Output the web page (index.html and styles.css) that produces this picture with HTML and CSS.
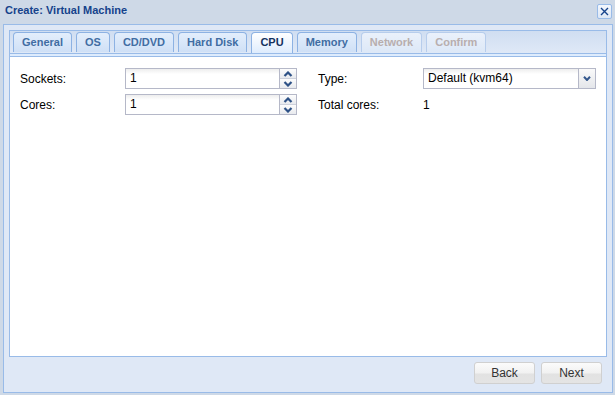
FILE: index.html
```html
<!DOCTYPE html>
<html>
<head>
  <title>Create: Virtual Machine</title>
  <link rel="stylesheet" href="styles.css">
</head>
<body>
  <div class="window">
    <div class="win-header">
      <span class="win-title">Create: Virtual Machine</span>
      <span class="win-close">
        <svg width="9" height="9" viewBox="0 0 9 9"><path d="M1 1 L8 8 M8 1 L1 8" stroke="#15428b" stroke-width="1.4" fill="none"/></svg>
      </span>
    </div>

    <div class="win-body">
      <div class="tabpanel">
        <div class="tab-bar">
          <div class="tab">General</div>
          <div class="tab">OS</div>
          <div class="tab">CD/DVD</div>
          <div class="tab">Hard Disk</div>
          <div class="tab active">CPU</div>
          <div class="tab">Memory</div>
          <div class="tab disabled">Network</div>
          <div class="tab disabled">Confirm</div>
        </div>
        <div class="tab-strip"></div>

        <div class="tab-content">
          <div class="form">
            <!-- left column -->
            <div class="field">
              <label class="field-label">Sockets:</label>
              <div class="control">
                <div class="text-box">1</div>
                <div class="spinner">
                  <span class="spin-half">
                    <svg width="10" height="6" viewBox="0 0 10 6"><path d="M1.5 5 L5 1.5 L8.5 5" stroke="#2d5186" stroke-width="2.2" fill="none"/></svg>
                  </span>
                  <span class="spin-half">
                    <svg width="10" height="6" viewBox="0 0 10 6"><path d="M1.5 1 L5 4.5 L8.5 1" stroke="#2d5186" stroke-width="2.2" fill="none"/></svg>
                  </span>
                </div>
              </div>
            </div>
            <!-- right column -->
            <div class="field">
              <label class="field-label">Type:</label>
              <div class="control">
                <div class="text-box">Default (kvm64)</div>
                <div class="combo-trigger">
                  <svg width="8" height="5" viewBox="0 0 8 5"><path d="M1 0.8 L4 4 L7 0.8" stroke="#34578c" stroke-width="2" fill="none"/></svg>
                </div>
              </div>
            </div>

            <div class="field">
              <label class="field-label">Cores:</label>
              <div class="control">
                <div class="text-box">1</div>
                <div class="spinner">
                  <span class="spin-half">
                    <svg width="10" height="6" viewBox="0 0 10 6"><path d="M1.5 5 L5 1.5 L8.5 5" stroke="#2d5186" stroke-width="2.2" fill="none"/></svg>
                  </span>
                  <span class="spin-half">
                    <svg width="10" height="6" viewBox="0 0 10 6"><path d="M1.5 1 L5 4.5 L8.5 1" stroke="#2d5186" stroke-width="2.2" fill="none"/></svg>
                  </span>
                </div>
              </div>
            </div>
            <div class="field">
              <label class="field-label">Total cores:</label>
              <div class="display-value">1</div>
            </div>
          </div>
        </div>
      </div>

      <div class="button-bar">
        <button class="btn">Back</button>
        <button class="btn">Next</button>
      </div>
    </div>
  </div>
</body>
</html>
```

FILE: styles.css
```css
body {
  margin: 0;
  font-family: "Liberation Sans", Arial, sans-serif;
  font-size: 12px;
  color: #000;
}

.window {
  width: 615px;
  height: 395px;
  background-color: #ced9e7;
  display: flex;
  flex-direction: column;
  box-sizing: border-box;
}

/* header */
.win-header {
  height: 24px;
  flex: none;
  display: flex;
  justify-content: space-between;
  align-items: flex-start;
  padding: 0 3px 0 5px;
}

.win-title {
  font-size: 11px;
  font-weight: bold;
  color: #15428b;
  line-height: 20px;
}

.win-close {
  margin-top: 4px;
  width: 15px;
  height: 15px;
  box-sizing: border-box;
  border: 1px solid #99bbe8;
  border-radius: 2px;
  background: linear-gradient(#f3f7fd, #dde7f5);
  display: flex;
  align-items: center;
  justify-content: center;
}

/* body */
.win-body {
  flex: 1;
  margin: 0 2px 2px 3px;
  border: 1px solid #99bbe8;
  background-color: #dfe8f6;
  padding: 5px 5px 0 5px;
  display: flex;
  flex-direction: column;
  min-height: 0;
}

.tabpanel {
  height: 327px;
  flex: none;
  box-sizing: border-box;
  border: 1px solid #99bbe8;
  display: flex;
  flex-direction: column;
}

.tab-bar {
  height: 21px;
  padding: 1px 0 0 3px;
  display: flex;
  gap: 4px;
  background: linear-gradient(#d0def1, #dfe9f7);
}

.tab {
  position: relative;
  height: 20px;
  box-sizing: border-box;
  padding: 0 8px;
  border: 1px solid #8db2e3;
  border-bottom: none;
  border-radius: 4px 4px 0 0;
  background: linear-gradient(#e3eefc, #cfe0f6);
  font-size: 11px;
  font-weight: bold;
  color: #416da3;
  line-height: 19px;
}

.tab.active {
  height: 21px;
  margin-bottom: -1px;
  z-index: 1;
  background: linear-gradient(#ffffff, #deecfd);
  color: #15325f;
}

.tab.disabled {
  color: #b8aeae;
  background: linear-gradient(#eaf1fb, #dde8f7);
  border-color: #b7cdec;
}

.tab-strip {
  height: 2px;
  flex: none;
  border-top: 1px solid #99bbe8;
  border-bottom: 1px solid #99bbe8;
  background-color: #deecfd;
}

.tab-content {
  flex: 1;
  background-color: #fff;
  padding: 11px 0 0 10px;
}

/* form */
.form {
  display: grid;
  grid-template-columns: 277px 278px;
  column-gap: 21px;
  row-gap: 5px;
}

.field {
  display: flex;
  align-items: center;
  height: 21px;
}

.field-label {
  width: 105px;
  flex: none;
}

.control {
  flex: 1;
  display: flex;
  height: 21px;
}

.text-box {
  flex: 1;
  box-sizing: border-box;
  border: 1px solid #b5b8c8;
  border-right: none;
  background: linear-gradient(#ededed, #ffffff 5px);
  padding: 0 4px;
  line-height: 19px;
}

.spinner {
  width: 18px;
  box-sizing: border-box;
  border: 1px solid #b5b8c8;
  display: flex;
  flex-direction: column;
}

.spin-half {
  flex: 1;
  display: flex;
  align-items: center;
  justify-content: center;
  background: linear-gradient(#fdfdfd, #e8eaee);
}

.spin-half + .spin-half {
  border-top: 1px solid #cdd1dc;
}

.combo-trigger {
  width: 18px;
  box-sizing: border-box;
  border: 1px solid #b5b8c8;
  background: linear-gradient(#fafafa, #e4e6ea);
  display: flex;
  align-items: center;
  justify-content: center;
}

/* buttons */
.button-bar {
  flex: 1;
  display: flex;
  justify-content: flex-end;
  align-items: flex-start;
  gap: 6px;
  padding: 5px 5px 0 0;
}

.btn {
  width: 61px;
  height: 22px;
  border: 1px solid #d0d0d0;
  border-radius: 3px;
  background: linear-gradient(#fbfbfb, #f1f1f1 50%, #e2e2e2 55%, #e4e4e4);
  font-family: "Liberation Sans", Arial, sans-serif;
  font-size: 12px;
  color: #333;
  padding: 0;
}
```
